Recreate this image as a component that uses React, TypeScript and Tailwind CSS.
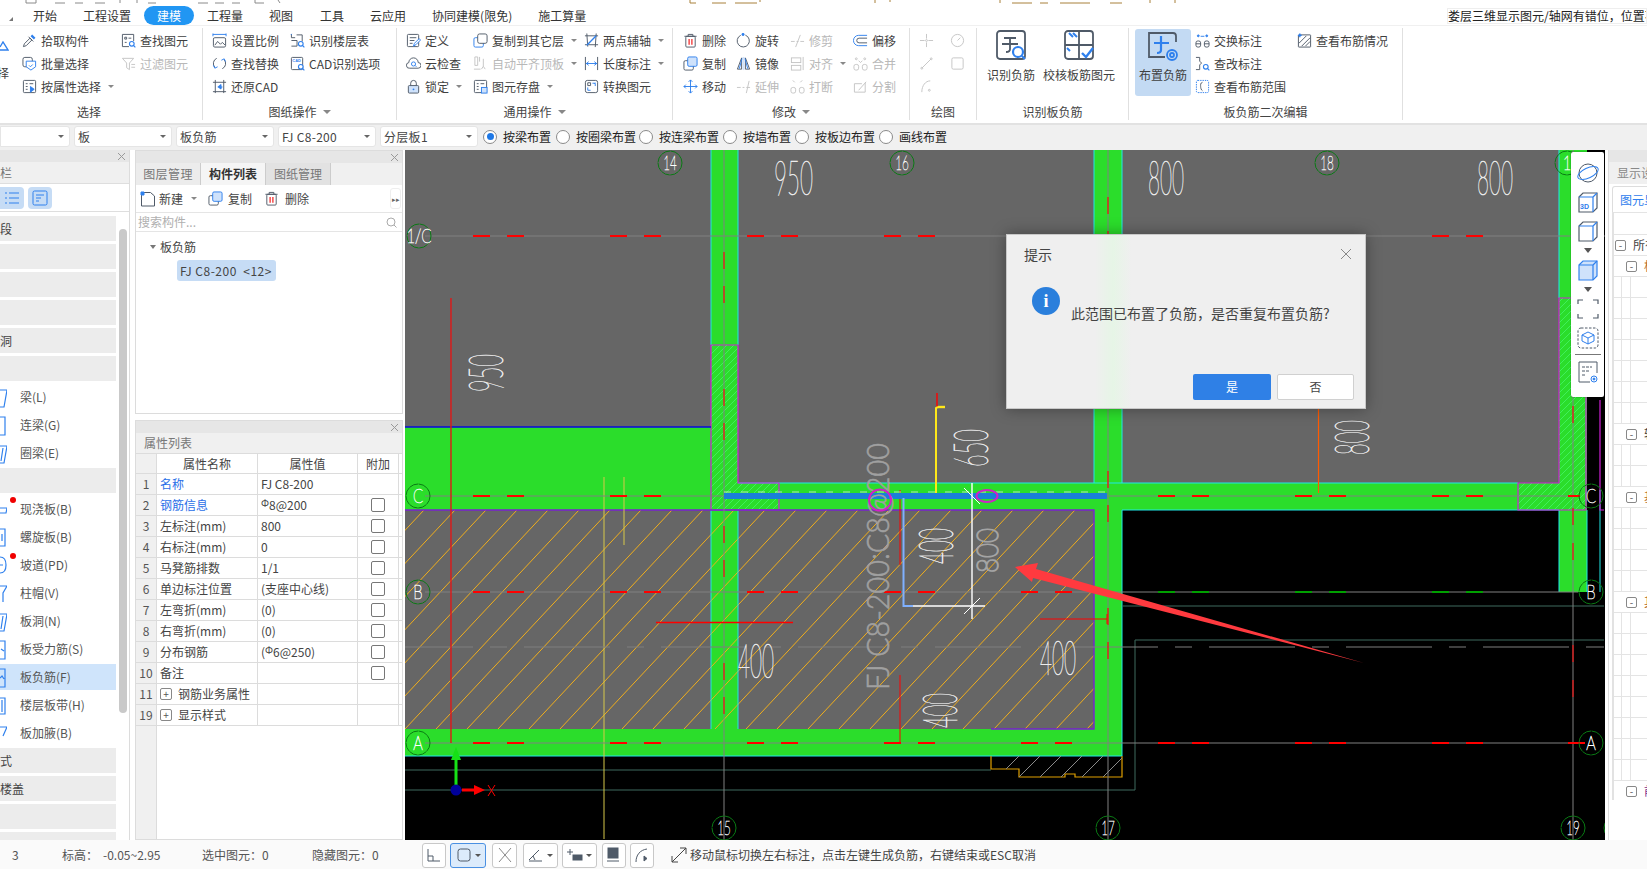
import React from "react";

const S = "#4f5a68";
const B = "#2f80ed";
const L = "#cfe2fb";
const G = "#c4c4c4";

type Node = React.ReactNode;
const Ic = ({ c, s = 16, cls = "" }: { c: Node; s?: number; cls?: string }) => (
  <svg width={s} height={s} viewBox="0 0 16 16" fill="none" stroke={S} strokeWidth={1} className={"shrink-0 " + cls}>
    {c}
  </svg>
);
const Mag = () => (
  <g stroke={B} strokeWidth={1.2}>
    <circle cx="11.5" cy="11.5" r="2.5" fill="#fff" />
    <path d="M13.3 13.3l2 2" />
  </g>
);
const icons: Record<string, Node> = {
  pick: <><path d="M1.5 14.5l1-3 6-6 2 2-6 6z" /><path d="M7 4l5 5" /><path d="M10 2.5l3.5 3.5" stroke={B} strokeWidth={2.4} /></>,
  batch: <><rect x="1" y="1.5" width="10" height="10" rx="2" /><path d="M4.5 5.5h10v6l-5 3.5-5-3.5z" fill="#fff" stroke={B} /><path d="M7.5 10l1.5 1.5 2.5-2.5" stroke={B} /></>,
  prop: <><rect x="1.5" y="1.5" width="13" height="13" rx="1" /><path d="M4 5h2M8 5h4M4 8h2M4 11h2" /><path d="M9 8v6l4-3z" fill={B} stroke={B} /></>,
  find: <><path d="M1.5 1.5h12v7M1.5 1.5v13h7" /><path d="M4 4.5h2v2H4zM8 5.5h3M4 10h2" /><Mag /></>,
  filter: <><path d="M1.5 2.5h12l-4.5 5v7l-3-2v-5z" stroke={G} /><path d="M11 9h4M11 12h4" stroke={G} /></>,
  scale: <><path d="M1 1.500h14M1 .5v3M15 .5v3" stroke={B} /><rect x="1.500" y="5" width="13" height="10" rx="1.500" /><path d="M3 13l3-4 3 3 2-2 3 3" /></>,
  replace: <><path d="M3 12A6 6 0 0 1 5 2.500" stroke={S} /><path d="M13 4a6 6 0 0 1-2 9.500" stroke={S} /><path d="M1.500 10l1.500 3 3-1.500M14.500 6L13 3l-3 1.500" stroke={B} /></>,
  restore: <><path d="M1 3.500h14M1 13.500h14M3.500 1v14M12.500 1v14" /><path d="M10 6L7 8.500l3 2M7 8.500h4" stroke={B} strokeWidth={1.6} /></>,
  floor: <><path d="M1.500 1v4h4M7 2h6v7M1.500 8h6v6h-6" /><path d="M2 1l-1 1" stroke={B} /><Mag /></>,
  cad: <><rect x="1.500" y="1.500" width="12" height="13" rx="1" /><text x="2.500" y="6.500" fontSize="4.200" fontWeight="700" fill={B} stroke="none" fontFamily="Liberation Sans">CAD</text><Mag /></>,
  define: <><rect x="1.500" y="1.500" width="12" height="13" rx="1" /><path d="M4 5h7M4 8h5M4 11h3" /><path d="M8 14l1-3 5-5 1.500 1.500-5 5z" fill="#fff" stroke={B} /></>,
  copyto: <><rect x="1" y="5" width="10" height="10" rx="1.500" stroke={B} fill="#fff" /><rect x="5" y="1" width="10" height="10" rx="2" fill="#fff" /></>,
  cloud: <><path d="M4 13a3 3 0 0 1-1-6 5 5 0 0 1 10 0 3 3 0 0 1 0 6z" /><circle cx="8" cy="8.500" r="2.200" stroke={B} /><path d="M9.600 10l1.500 1.500" stroke={B} /></>,
  lock: <><path d="M5 7V4.500a3 3 0 0 1 6 0V7" /><rect x="2.500" y="7" width="11" height="8" rx="1" fill={L} /><circle cx="8" cy="11" r="1" fill={B} stroke="none" /></>,
  level: <g stroke={G}><path d="M2 1v9h3V1zM7 1v5M1 14h7" /><path d="M11 3v8M9 14l2-3 2 3" /></g>,
  store: <><rect x="1.500" y="1.500" width="13" height="13" rx="1" /><path d="M4 5h2M8 5h4M4 8h2M4 11h2" /><rect x="9" y="9" width="6" height="6" fill={L} stroke={B} /></>,
  axis: <><path d="M3 .5l1 14M1 3h14M1 12.500h14M13 .5L12 15" /><path d="M3 13L13 3" stroke={B} strokeWidth={1.400} /></>,
  dim: <><path d="M1.500 1v14M14.500 1v14" /><path d="M2 8h12M5 6L2.500 8 5 10M11 6l2.500 2L11 10" stroke={B} /></>,
  convert: <><rect x="1.500" y="1.500" width="13" height="13" rx="2" /><path d="M4 4h3v3H4z" /><path d="M9 4.500h3v3M12 4l-1 1M7 12H4V9" stroke={B} /></>,
  del: <><path d="M1.500 3.500h13M5.500 3.500V1.500h5v2" /><rect x="3" y="3.500" width="10" height="11.500" rx="1" /><path d="M6.500 6.500v6M9.500 6.500v6" stroke="#e11" strokeWidth={1.200} /></>,
  rotate: <><path d="M10 2.300A6.500 6.500 0 1 1 5 2.500" /><circle cx="7.500" cy="1.500" r="1.200" fill={B} stroke={B} /></>,
  trim: <g stroke={G}><path d="M1 9h4M7 9h2M11 9h4M11 2L6 15" /></g>,
  offset: <><path d="M15 2.500H6A5.500 5.500 0 0 0 6 13.500h9" stroke={B} /><path d="M15 5.500H6.500A2.500 2.500 0 0 0 6.500 10.500H15" /></>,
  copy: <><rect x="1" y="5" width="10" height="10" rx="1.500" fill="#fff" /><rect x="5" y="1" width="10" height="10" rx="1.500" fill={L} stroke={B} /></>,
  mirror: <><path d="M6 2L1.500 14H6zM10 2l4.500 12H10z" /><path d="M6.500 2.500l-3 11M9.500 2.500l3 11" stroke={B} /><path d="M8 1v14" stroke={L} strokeWidth={2} /></>,
  align: <g stroke={G}><rect x="1.500" y="2" width="10" height="5" /><rect x="1.500" y="10" width="10" height="5" /><path d="M14 1v14" /></g>,
  merge: <g stroke={G}><circle cx="3.500" cy="3" r="1" /><circle cx="12.500" cy="3" r="1" /><rect x="1" y="9" width="5" height="6" rx="2" /><rect x="10" y="9" width="5" height="6" rx="2" /><path d="M6 5l2 2 2-2" /></g>,
  move: <g stroke={B}><path d="M8 1v14M1 8h14M6 3l2-2 2 2M6 13l2 2 2-2M3 6L1 8l2 2M13 6l2 2-2 2" /></g>,
  extend: <g stroke={G}><path d="M1 9h4M7 9h2M11 9h4M14 2L11 15" /></g>,
  brk: <g stroke={G}><path d="M3 1.500l2 2M13 1.500l-2 2" /><rect x="1" y="9" width="5" height="6" rx="2" /><rect x="10" y="9" width="5" height="6" rx="2" /></g>,
  split: <g stroke={G}><path d="M13 4v10H1.500V5h8" /><path d="M6 12l8-9" /></g>,
  swap: <><circle cx="3.500" cy="3" r="1" fill={B} stroke={B} /><circle cx="12.500" cy="3" r="1" fill={B} stroke={B} /><path d="M6 3.500h4" stroke={B} /><rect x="1" y="8.500" width="5" height="6.500" rx="2" /><rect x="10" y="8.500" width="5" height="6.500" rx="2" /><path d="M1 11.500h5M10 11.500h5" /></>,
  check: <><path d="M1 1.500h4v4l2 2-2 2v5H1" /><Mag /></>,
  range: <><rect x="1.500" y="1.500" width="13" height="13" rx="1.500" stroke={B} strokeDasharray="1.500 1" /><path d="M8 3.500C5.500 4 6 7 6 8s.5 4 2 4.500" /></>,
  see: <><rect x="1.500" y="2" width="13" height="13" rx="0.500" /><path d="M2 11l8-8M5 14l9-9M9 14l5-5" /><path d="M3 .5v4M1 2.500h4" stroke={B} strokeWidth={1.500} /></>,
};

const Item = ({ i, t, grey, dd, gap = 4 }: { i: string; t: string; grey?: boolean; dd?: boolean; gap?: number }) => (
  <div className="flex items-center h-[23px]" style={{ gap }}>
    <Ic c={icons[i]} s={15} />
    <span className={"whitespace-nowrap " + (grey ? "text-[#b8b8b8]" : "text-[#3f3f3f]")}>{t}</span>
    {dd && <span className="ml-[3px] w-0 h-0 border-x-[3px] border-x-transparent border-t-[3px] border-t-[#888]" />}
  </div>
);
const Col = ({ w, children }: { w: number; children: Node }) => (
  <div className="flex flex-col shrink-0" style={{ width: w }}>{children}</div>
);
const Group = ({ w, pl, label, dd, pr = 0, children }: { w: number; pl: number; label: string; dd?: boolean; pr?: number; children: Node }) => (
  <div className="flex flex-col h-[92px] border-r border-[#e0e0e0] shrink-0" style={{ width: w }}>
    <div className="flex h-[70px] pt-[1px] shrink-0" style={{ paddingLeft: pl }}>{children}</div>
    <div className="h-[28px] shrink-0 flex items-center justify-center gap-[6px] text-[#444]" style={{ paddingRight: pr }}>
      {label}
      {dd && <span className="w-0 h-0 border-x-[4px] border-x-transparent border-t-[4px] border-t-[#888]" />}
    </div>
  </div>
);
const Big = ({ c, t, w, active }: { c: Node; t: string; w: number; active?: boolean }) => (
  <div className={"flex flex-col items-center h-[67px] rounded-[3px] shrink-0 " + (active ? "bg-[#c3daf3]" : "")} style={{ width: w }}>
    <svg width="32" height="32" viewBox="0 0 32 32" fill="none" stroke={S} strokeWidth={1.8} className="mt-[1px]">{c}</svg>
    <span className="mt-[5px] whitespace-nowrap leading-[16px] text-[#3f3f3f]">{t}</span>
  </div>
);

const Select = ({ t, w, cut }: { t: string; w: number; cut?: boolean }) => (
  <div className={"h-[21px] bg-white border border-[#e5e5e5] flex items-center justify-between pl-[3px] pr-[5px] shrink-0 " + (cut ? "rounded-r-[3px]" : "rounded-[3px]")} style={{ width: w }}>
    <span className="text-[#444] text-[12px] tracking-[0.3px]">{t}</span>
    <span className="w-0 h-0 border-x-[3px] border-x-transparent border-t-[3px] border-t-[#666]" />
  </div>
);
const Radio = ({ t, w, on }: { t: string; w: number; on?: boolean }) => (
  <div className="flex items-center gap-[6px] shrink-0" style={{ width: w }}>
    <span className="w-[14px] h-[14px] rounded-full border border-[#8a8a8a] bg-white flex items-center justify-center">
      {on && <span className="w-[7px] h-[7px] rounded-full bg-[#1e78e6]" />}
    </span>
    <span className="text-[#222] whitespace-nowrap">{t}</span>
  </div>
);

const NavG = ({ t, mt = 3 }: { t?: string; mt?: number }) => (
  <div className="h-[25px] bg-[#ececec] flex items-center text-[#444] w-[116px] shrink-0" style={{ marginTop: mt }}>{t}</div>
);
const NavI = ({ t, dot, on, d }: { t: string; dot?: boolean; on?: boolean; d: string }) => (
  <div className={"h-[26px] my-[1px] w-[116px] flex items-center relative shrink-0 " + (on ? "bg-[#cfe4fb]" : "")}>
    <svg width="7" height="24" viewBox="0 0 7 24" fill="none" stroke={B} strokeWidth={1.2} className="shrink-0"><path d={d} /></svg>
    <span className="ml-[13px] text-[#555] whitespace-nowrap">{t}</span>
    {dot && <span className="absolute left-[10px] top-[1px] w-[6px] h-[6px] rounded-full bg-[#f00000]" />}
  </div>
);

const Strip = () => (
  <div className="h-[12px] bg-[#e6e6e6] flex justify-end items-center pr-[3px] text-[#9a9a9a] shrink-0">
    <svg width="9" height="9" viewBox="0 0 9 9" stroke="#999"><path d="M1 1l7 7M8 1L1 8" /></svg>
  </div>
);

const rows: [string, string, Node, boolean, boolean?][] = [
  ["1", "名称", "FJ C8-200", false, true],
  ["2", "钢筋信息", <><span className="text-[10px] relative top-[-2px]">Φ</span>8@200</>, true, true],
  ["3", "左标注(mm)", "800", true],
  ["4", "右标注(mm)", "0", true],
  ["5", "马凳筋排数", "1/1", true],
  ["6", "单边标注位置", "(支座中心线)", true],
  ["7", "左弯折(mm)", "(0)", true],
  ["8", "右弯折(mm)", "(0)", true],
  ["9", "分布钢筋", <>(<span className="text-[10px] relative top-[-2px]">Φ</span>6@250)</>, true],
  ["10", "备注", "", true],
];

const Cell = ({ w, children, cls = "" }: { w: number; children?: Node; cls?: string }) => (
  <div className={"h-full flex items-center border-r border-[#dcdcdc] shrink-0 " + cls} style={{ width: w }}>{children}</div>
);
const Plus = () => (
  <span className="w-[12px] h-[12px] border border-[#888] rounded-[2px] flex items-center justify-center text-[10px] leading-none text-[#555] ml-[3px] mr-[6px]">+</span>
);
const Minus = ({ ml }: { ml: number }) => (
  <span className="w-[11px] h-[11px] border border-[#888] rounded-[2px] flex items-center justify-center text-[10px] leading-none text-[#555] bg-white shrink-0" style={{ marginLeft: ml }}>-</span>
);

/* thin CAD stroke lettering: Lato hairline, squeezed to the box */
const CadT = ({ x, y, w, h, t, rot, col = "#ececec", sw = 0.7, weight = 100 }: { x: number; y: number; w: number; h: number; t: string; rot?: boolean; col?: string; sw?: number; weight?: number }) => {
  const size = h / 0.72;
  const sx = w / (t.length * 0.58 * size);
  return (
    <text
      transform={`translate(${x} ${y}) ${rot ? "rotate(-90)" : ""} scale(${sx} 1)`}
      fontSize={size}
      fontFamily="Lato"
      fontWeight={weight}
      fill={col}
      stroke={col}
      strokeWidth={sw}
    >
      {t}
    </text>
  );
};
const Bub = ({ x, y, t, r = 12 }: { x: number; y: number; t: string; r?: number }) => {
  const w = t.length > 1 ? (t === "1/C" ? 27 : 14) : 9;
  const size = 20;
  return (
    <g>
      <circle cx={x} cy={y} r={r} stroke="#0a7a14" strokeWidth={1} fill="none" strokeDasharray="9 0.500" />
      <text
        transform={`translate(${x} ${y + 7}) scale(${w / (t.length * 0.6 * size)} 1)`}
        textAnchor="middle"
        fontSize={size}
        fontFamily="Lato"
        fontWeight={100}
        fill="#fff"
        stroke="#fff"
        strokeWidth={0.6}
      >
        {t}
      </text>
    </g>
  );
};

const HP = (y: number, from: number, to: number, color = "#ff0000") => {
  const out: Node[] = [];
  for (let k = 0; k < 9; k++) {
    for (const s of [473 + 137 * k, 507 + 137 * k]) {
      if (s >= from && s + 17 <= to) out.push(<path key={y + "-" + s} d={`M${s} ${y}h17`} stroke={color} strokeWidth={2} />);
    }
  }
  return out;
};
const VP = (x: number, a: number, b: number, from: number, to: number) => {
  const out: Node[] = [];
  for (let k = -1; k < 6; k++) {
    for (const s of [a + 137 * k, b + 137 * k]) {
      if (s >= from && s <= to) out.push(<path key={x + "-" + s} d={`M${x} ${s}v17`} stroke="#f01010" strokeWidth={1.2} />);
    }
  }
  return out;
};

const hatch = (() => {
  const out: Node[] = [];
  for (let i = -10; i < 30; i++) {
    const x = 405 + i * 31;
    out.push(<path key={i} d={`M${x} 729L${x + 205} 510`} />);
  }
  return out;
})();
const lime = (() => {
  const out: Node[] = [];
  for (let i = -2; i < 70; i++) {
    const s = 290 + i * 7;
    out.push(<path key={i} d={`M700 ${s + 40}L800 ${s - 60}M1510 ${s + 40}L1610 ${s - 60}`} />);
  }
  return out;
})();

const Canvas = () => (
  <svg width="1200" height="690" viewBox="405 150 1200 690" fill="none" className="block">
    <defs>
      <clipPath id="slab"><rect x="405" y="510" width="689" height="219" /></clipPath>
      <clipPath id="m1"><path d="M711 345H738V483H779V510H711Z" /></clipPath>
      <clipPath id="m2"><path d="M1559 298H1586V510H1518V483H1559Z" /></clipPath>
      <clipPath id="shape"><path d="M991 756V769H1019V777H1122V756Z" /></clipPath>
    </defs>
    <rect x="405" y="150" width="1200" height="690" fill="#000" />
    <rect x="405" y="150" width="1154" height="333" fill="#666" />
    <rect x="405" y="510" width="689" height="219" fill="#666" />
    <g fill="#2bdd2b">
      <rect x="711" y="150" width="27" height="579" />
      <rect x="1094" y="150" width="28" height="606" />
      <rect x="1559" y="150" width="28" height="442" />
      <rect x="711" y="483" width="876" height="27" />
      <rect x="405" y="427" width="306" height="83" />
      <rect x="405" y="729" width="717" height="27" />
    </g>
    <g clipPath="url(#slab)" stroke="#f0ae1c" strokeWidth={1}>{hatch}</g>
    <g clipPath="url(#m1)"><g stroke="#40f05c" strokeWidth={1}>{lime}</g></g>
    <g clipPath="url(#m2)"><g stroke="#40f05c" strokeWidth={1}>{lime}</g></g>

    <g stroke="#20e8e8" strokeWidth={1}>
      <path d="M711 150V345M738 150V345M711 510V729M738 510V729M1094 150V483M1122 150V483" />
      <path d="M738 483H1518M1122 510H1559M1122 510V756M405 756H1122M1559 150V298M1559 510V592M1587 510V592M1600 490V592" />
    </g>
    <g stroke="#d020d8" strokeWidth={1.2}>
      <path d="M711 345H738V483H779V510H711Z" />
      <path d="M1559 298H1586V510H1518V483H1559Z" />
      <path d="M1600 400V510H1604" />
    </g>
    <path d="M405 427H711" stroke="#0808e0" strokeWidth={1.4} />
    <path d="M405 510H1094V729H991" stroke="#7a22d0" strokeWidth={1.4} />

    <g stroke="#3e6b5e" strokeWidth={1}>
      <path d="M405 770H991M405 790H1135V640H1604M1122 606H1604" />
    </g>
    <path d="M991 756V769H1019V777H1065V774H1075V777H1122V756" stroke="#e0a000" strokeWidth={1.2} />
    <g stroke="#8a8a8a" clipPath="url(#shape)">
      <path d="M998 777l21-21M1019 777l21-21M1040 777l21-21M1061 777l21-21M1082 777l21-21M1103 777l21-21" />
    </g>

    <path d="M604 477V839" stroke="#d6c84a" />
    <path d="M624 477V545" stroke="#d6c84a" />

    <g stroke="#808080" strokeWidth={1}>
      <path d="M425 236H1605M425 496H1578M425 592H1578M425 743H1578" />
      <path d="M724 150V840M1108 150V840M1573 150V840" />
    </g>
    <path d="M405 647H473M490 647H507M524 647H610M627 647H644M661 647H747M764 647H781M798 647H884M901 647H918M935 647H1021M1038 647H1055M1072 647H1158M1175 647H1192M1209 647H1295M1312 647H1329M1346 647H1432M1449 647H1466M1483 647H1569M1586 647H1604" stroke="#7e7e7e" />

    {HP(236, 405, 1572)}
    {HP(496, 405, 1572)}
    {HP(592, 405, 1122)}
    {HP(592, 1122, 1572, "#00a000")}
    {HP(743, 405, 1572)}
    <path d="M1568 743h17M1568 496h12" stroke="#f00" strokeWidth={2} />
    {VP(724, 252, 286, 150, 725)}
    {VP(1108, 197, 231, 150, 725)}
    {VP(1573, 234, 269, 300, 700)}

    <path d="M451 298V743" stroke="#e01818" strokeWidth={1.4} />
    <path d="M656 622.500H793" stroke="#f00" strokeWidth={1.4} />
    <path d="M1040 619H1107M1107 614v10" stroke="#f00" strokeWidth={1} />
    <path d="M900 490V565M900 675V743H885" stroke="#f00" strokeWidth={1} />
    <path d="M937 393V407" stroke="#f00" strokeWidth={1.4} />
    <path d="M936 493V408L938 407" stroke="#ffe81a" strokeWidth={2} />
    <path d="M938 407h7" stroke="#ffe81a" strokeWidth={2.4} />
    <path d="M1318.500 409V493" stroke="#ff5a00" strokeWidth={1.2} />

    <path d="M724 496H1107" stroke="#1a7fd8" strokeWidth={6} />
    <path d="M724 492H1107" stroke="#e8f0f0" strokeWidth={1} strokeDasharray="7 10" opacity="0.7" />
    <path d="M903.500 498V606H913" stroke="#7fb0ff" strokeWidth={2} />
    <path d="M913 606H985M972 483V619" stroke="#fff" strokeWidth={1.400} />
    <path d="M964 614l16-16M964 488l16 16" stroke="#fff" strokeWidth={1} />

    <CadT x={774} y={195} w={39} h={35} t="950" />
    <CadT x={1148} y={195} w={36} h={35} t="800" />
    <CadT x={1477} y={195} w={36} h={35} t="800" />
    <CadT x={503} y={392} w={38} h={34} t="950" rot />
    <CadT x={988} y={467} w={38} h={34} t="650" rot />
    <CadT x={1369} y={455} w={35} h={34} t="800" rot />
    <CadT x={953} y={564} w={36} h={34} t="400" rot />
    <CadT x={957} y={728} w={35} h={35} t="400" rot />
    <CadT x={738} y={678} w={36} h={34} t="400" />
    <CadT x={1040} y={675} w={36} h={34} t="400" />
    <CadT x={998} y={573} w={45} h={22} t="800" rot col="#a4a4a4" sw={1.6} />
    <text
      transform="translate(889 690) rotate(-90) scale(0.900 1)"
      fontSize="32"
      fontFamily="Lato"
      fontWeight={300}
      fill="#a0a0a0"
      stroke="#a0a0a0"
      strokeWidth={0.6}
    >
      FJ C8-200:C8@200
    </text>
    <ellipse cx="880" cy="500" rx="11" ry="10.500" stroke="#d020c8" strokeWidth={2} />
    <ellipse cx="987" cy="496" rx="10.500" ry="6" stroke="#d020c8" strokeWidth={2} />

    <Bub x={670} y={163} t="14" />
    <Bub x={902} y={163} t="16" />
    <Bub x={1327} y={163} t="18" />
    <Bub x={1567} y={163} t="1" />
    <Bub x={419} y={236} t="1/C" />
    <Bub x={418} y={496} t="C" />
    <Bub x={418} y={592} t="B" />
    <Bub x={418} y={743} t="A" />
    <Bub x={724} y={828} t="15" />
    <Bub x={1108} y={828} t="17" />
    <Bub x={1573} y={828} t="19" />
    <Bub x={1591} y={496} t="C" />
    <Bub x={1591} y={592} t="B" />
    <Bub x={1591} y={743} t="A" />
    <circle cx="1616" cy="828" r="12" stroke="#0a7a14" />

    <path d="M456 785V758" stroke="#16e016" strokeWidth={3} />
    <path d="M456 747l-5 13h10z" fill="#16e016" />
    <path d="M462 790H476" stroke="#f00" strokeWidth={3} />
    <path d="M485 790l-11-5v10z" fill="#f00" />
    <circle cx="456" cy="790" r="5.500" fill="#00009a" />
    <path d="M488 785l7 11M495 785l-7 11" stroke="#f00" />

    <path d="M1015 567L1038 563L1036 569L1364 663L1033 578L1032 582Z" fill="#ff3a3f" />
  </svg>
);

const TB = ({ c, h = 29 }: { c: Node; h?: number }) => (
  <div className="flex items-center justify-center shrink-0" style={{ height: h }}>
    <svg width="22" height="22" viewBox="0 0 22 22" fill="none" stroke={S} strokeWidth={1}>{c}</svg>
  </div>
);
const Tri = () => <div className="h-[10px] flex items-center justify-center shrink-0"><span className="w-0 h-0 border-x-[4px] border-x-transparent border-t-[5px] border-t-[#555]" /></div>;
const cube = (fill: string, st: string) => (
  <>
    <path d="M2 6l4-4h14v15l-4 4H2z" fill={fill} stroke={st} strokeWidth={1.2} />
    <path d="M2 6h14v15M16 6l4-4" stroke={st === S ? B : st} strokeWidth={1.2} />
  </>
);

const SBtn = ({ w, ml, on, c, dd }: { w: number; ml: number; on?: boolean; c: Node; dd?: boolean }) => (
  <div className={"h-[25px] rounded-[3px] border flex items-center justify-center gap-[3px] shrink-0 " + (on ? "border-[#4a90e2] bg-[#dcebfb]" : "border-[#c8c8c8] bg-white")} style={{ width: w, marginLeft: ml }}>
    <svg width="16" height="16" viewBox="0 0 16 16" fill="none" stroke={S} strokeWidth={1}>{c}</svg>
    {dd && <span className="w-0 h-0 border-x-[3px] border-x-transparent border-t-[3px] border-t-[#555]" />}
  </div>
);

export default function App() {
  return (
    <div
      className="w-[1647px] h-[869px] bg-white overflow-hidden relative text-[12px] leading-[16px] text-[#444] flex flex-col"
      style={{ fontFamily: '"Noto Sans CJK SC","Noto Sans",sans-serif' }}
    >
      <svg width="1647" height="4" viewBox="0 0 1647 4" fill="none" className="block shrink-0">
        <path d="M26 0v3h10V0M55 3h10M75 3h8M95 3h10M120 0v3M137 0v3M148 3h8M198 3h10M215 3h9M232 3h8M255 0v3h9M278 0l2 3" stroke="#8a8a8a" />
        <path d="M690 0v3h6M712 3h14M735 3h22M760 0v2M875 0v3M890 0v2M1000 0v3M1012 3h20M1040 3h8M1060 3h30M1110 3h12M1150 0v3M1175 0v3" stroke="#a8803a" />
      </svg>
      <div className="h-[22px] pt-[2px] flex items-center relative shrink-0 border-b border-[#f0f0f0] text-[#333]">
        <span className="absolute left-[9px] top-[13px] w-0 h-0 border-l-[4px] border-l-transparent border-b-[4px] border-b-[#777]" />
        <span className="ml-[33px]">开始</span>
        <span className="ml-[26px]">工程设置</span>
        <span className="ml-[13px] w-[50px] h-[19px] rounded-full bg-[#2196f3] text-white flex items-center justify-center">建模</span>
        <span className="ml-[13px]">工程量</span>
        <span className="ml-[26px]">视图</span>
        <span className="ml-[27px]">工具</span>
        <span className="ml-[26px]">云应用</span>
        <span className="ml-[26px]">协同建模(限免)</span>
        <span className="ml-[26px]">施工算量</span>
        <div className="ml-auto w-[200px] h-[16px] border border-[#eee] bg-white text-[#222] whitespace-nowrap overflow-hidden leading-[14px]">{"娄层三维显示图元/轴网有错位\uFF0C位置不对"}</div>
      </div>

      {/* Ribbon */}
      <div className="h-[99px] pt-[2px] flex shrink-0 border-b-2 border-[#e2e2e2] bg-white relative">
        <Group w={203} pl={0} label="选择" pr={24}>
          <div className="w-[22px] shrink-0 flex flex-col overflow-hidden">
            <svg width="9" height="10" viewBox="0 0 9 10" fill="none" stroke={B} strokeWidth={1.4} className="mt-[12px] shrink-0"><path d="M0 9h8L3 1 0 6" /></svg>
            <span className="-ml-[3px] mt-[14px] text-[#3f3f3f] leading-[16px]">择</span>
          </div>
          <Col w={99}>
            <Item i="pick" t="拾取构件" />
            <Item i="batch" t="批量选择" />
            <Item i="prop" t="按属性选择" dd />
          </Col>
          <Col w={80}>
            <Item i="find" t="查找图元" />
            <Item i="filter" t="过滤图元" grey />
          </Col>
        </Group>
        <Group w={194} pl={9} label="图纸操作" dd>
          <Col w={78}>
            <Item i="scale" t="设置比例" />
            <Item i="replace" t="查找替换" />
            <Item i="restore" t="还原CAD" />
          </Col>
          <Col w={100}>
            <Item i="floor" t="识别楼层表" />
            <Item i="cad" t="CAD识别选项" />
          </Col>
        </Group>
        <Group w={276} pl={9} label="通用操作" dd>
          <Col w={67}>
            <Item i="define" t="定义" />
            <Item i="cloud" t="云检查" />
            <Item i="lock" t="锁定" dd />
          </Col>
          <Col w={111}>
            <Item i="copyto" t="复制到其它层" dd />
            <Item i="level" t="自动平齐顶板" grey dd />
            <Item i="store" t="图元存盘" dd />
          </Col>
          <Col w={85}>
            <Item i="axis" t="两点辅轴" dd />
            <Item i="dim" t="长度标注" dd />
            <Item i="convert" t="转换图元" />
          </Col>
        </Group>
        <Group w={237} pl={10} label="修改" dd>
          <Col w={53}>
            <Item i="del" t="删除" />
            <Item i="copy" t="复制" />
            <Item i="move" t="移动" />
          </Col>
          <Col w={54}>
            <Item i="rotate" t="旋转" />
            <Item i="mirror" t="镜像" />
            <Item i="extend" t="延伸" grey />
          </Col>
          <Col w={63}>
            <Item i="trim" t="修剪" grey />
            <Item i="align" t="对齐" grey dd />
            <Item i="brk" t="打断" grey />
          </Col>
          <Col w={50}>
            <Item i="offset" t="偏移" />
            <Item i="merge" t="合并" grey />
            <Item i="split" t="分割" grey />
          </Col>
        </Group>
        <Group w={67} pl={9} label="绘图">
          <div className="grid grid-cols-[31px_16px] auto-rows-[23px] items-center">
            <Ic s={15} c={<g stroke={G}><path d="M8 1v5M8 10v5M1 8h5M10 8h5" /><circle cx="8" cy="8" r="1" /></g>} />
            <Ic s={15} c={<g stroke={G}><circle cx="8" cy="8" r="6.500" /><path d="M8 8l3-3" /></g>} />
            <Ic s={15} c={<g stroke={G}><path d="M3 13L13 3" /><circle cx="3" cy="13" r="1" /><circle cx="13" cy="3" r="1" /></g>} />
            <Ic s={15} c={<rect x="2" y="2" width="12" height="12" rx="1.500" stroke={G} />} />
            <Ic s={15} c={<g stroke={G}><path d="M3 14C3 7 7 2 12 2" /><circle cx="11" cy="12" r="1" /></g>} />
          </div>
        </Group>
        <Group w={152} pl={9} label="识别板负筋">
          <Big w={50} t="识别负筋" c={<><rect x="2" y="1" width="28" height="28" rx="3" /><path d="M7 14h16M15 7v12c0 3-3 3-4 3M9 8h12" /><circle cx="23" cy="22" r="5" stroke={B} fill="#fff" strokeWidth={2.200} /><path d="M27 26l3 3" stroke={B} strokeWidth={2.200} /></>} />
          <Big w={86} t="校核板筋图元" c={<><rect x="2" y="1" width="28" height="28" rx="3" /><path d="M16 1v28M2 15h28" /><path d="M6 3l4 4M10 3l4 4M4 18l3 3" stroke={B} strokeWidth={2} /><path d="M19 23l4 4 7-9" stroke={B} strokeWidth={2.400} fill="#fff" /></>} />
        </Group>
        <Group w={274} pl={6} label="板负筋二次编辑">
          <Big w={56} active t="布置负筋" c={<><path d="M26 3c2 0 3 1 3 3v6M2 10V3h24M2 3v24h16" /><path d="M7 13h15M14 6v14c0 3-2 3-4 3" stroke={B} strokeWidth={2.200} /><circle cx="25" cy="25" r="5" stroke={B} /><circle cx="25" cy="25" r="2" stroke={B} /></>} />
          <div className="w-[4px] shrink-0" />
          <Col w={102}>
            <Item i="swap" t="交换标注" />
            <Item i="check" t="查改标注" />
            <Item i="range" t="查看布筋范围" />
          </Col>
          <Col w={100}>
            <Item i="see" t="查看布筋情况" />
          </Col>
        </Group>
      </div>

      {/* Option bar */}
      <div className="h-[25px] pb-[2px] bg-[#f0f0f0] flex items-center shrink-0 gap-[4px]">
        <Select t="" w={70} cut />
        <Select t="板" w={98} />
        <Select t="板负筋" w={98} />
        <Select t="FJ C8-200" w={98} />
        <Select t="分层板1" w={98} />
        <div className="flex ml-[1px]">
          <Radio t="按梁布置" w={73} on />
          <Radio t="按圈梁布置" w={83} />
          <Radio t="按连梁布置" w={84} />
          <Radio t="按墙布置" w={72} />
          <Radio t="按板边布置" w={84} />
          <Radio t="画线布置" w={80} />
        </div>
      </div>

      {/* Main */}
      <div className="flex h-[690px] shrink-0 bg-white">
        {/* Left nav */}
        <div className="w-[130px] shrink-0 flex flex-col border-r border-[#dcdcdc] relative overflow-hidden">
          <Strip />
          <div className="h-[22px] bg-[#f0f0f0] flex items-center text-[#777] border-b border-[#dedede] shrink-0">栏</div>
          <div className="h-[28px] flex items-center gap-[4px] border-b border-[#dedede] shrink-0">
            <div className="w-[24px] h-[22px] bg-[#c6dcf5] rounded-r-[4px] flex items-center justify-center">
              <svg width="16" height="14" viewBox="0 0 16 14" fill="none" stroke={B}><path d="M1 2h2M1 7h2M1 12h2M5 2h10M5 7h10M5 12h10" /></svg>
            </div>
            <div className="w-[24px] h-[22px] bg-[#c6dcf5] rounded-[4px] flex items-center justify-center">
              <svg width="16" height="16" viewBox="0 0 16 16" fill="none" stroke={B}><rect x="1" y="1" width="14" height="14" rx="1.500" /><path d="M4 5h8M4 8h5M4 11h3" /></svg>
            </div>
          </div>
          <div className="flex flex-col pt-[1px]">
            <NavG t="段" />
            <NavG />
            <NavG />
            <NavG />
            <NavG t="洞" />
            <NavG />
            <div className="h-[2px] shrink-0" />
            <NavI t="梁(L)" d="M0 5h7L4 22H0" />
            <NavI t="连梁(G)" d="M0 4h5v18H0" />
            <NavI t="圈梁(E)" d="M0 5h7L4 22H0M3 7L1 20" />
            <NavG mt={1} />
            <div className="h-[2px] shrink-0" />
            <NavI t="现浇板(B)" dot d="M0 11h7L6 16H0" />
            <NavI t="螺旋板(B)" d="M0 4h5v17H0M2 9v7" />
            <NavI t="坡道(PD)" dot d="M0 4c4 0 6 3 6 8s-2 8-6 8M0 12h3" />
            <NavI t="柱帽(V)" d="M0 5h7L3 12v9" />
            <NavI t="板洞(N)" d="M0 5h7L4 22H0M3 7L1 20" />
            <NavI t="板受力筋(S)" d="M0 4h5v18H0M1 12l3 2" />
            <NavI t="板负筋(F)" on d="M0 4h5v18H0M0 13l2-2 2 3" />
            <NavI t="楼层板带(H)" d="M0 5h5v16H0M2 7v12" />
            <NavI t="板加腋(B)" d="M0 6h7L3 15" />
            <NavG t="式" mt={1} />
            <NavG t="楼盖" />
            <NavG />
            <NavG />
          </div>
          <div className="absolute left-[119px] top-[79px] w-[8px] h-[484px] rounded-full bg-[#c9c9c9]" />
        </div>

        <div className="w-[5px] shrink-0" />

        {/* Middle */}
        <div className="w-[268px] shrink-0 flex flex-col">
          <div className="h-[264px] flex flex-col border border-[#dcdcdc] shrink-0">
            <Strip />
            <div className="h-[22px] flex bg-[#f0f0f0] shrink-0">
              <div className="w-[65px] flex items-center justify-center bg-[#ececec] border-r border-[#ccc] text-[#777] tracking-[0.4px] text-[12px]">图层管理</div>
              <div className="w-[65px] flex items-center justify-center bg-[#f5f5f5] border-r border-[#ccc] text-[#333] font-bold">构件列表</div>
              <div className="w-[65px] flex items-center justify-center bg-[#e2e2e2] border-r border-[#ccc] text-[#777]">图纸管理</div>
            </div>
            <div className="h-[28px] flex items-center border-b border-[#e5e5e5] shrink-0 relative pl-[4px]">
              <Ic s={16} c={<><path d="M1.500 4v11h13V5L10.500 1.500H4" /><path d="M1 1h3v3H1z" fill={B} stroke={B} /></>} />
              <span className="ml-[3px]">新建</span>
              <span className="ml-[8px] w-0 h-0 border-x-[3px] border-x-transparent border-t-[3px] border-t-[#888]" />
              <span className="ml-[11px]"><Ic s={15} c={icons.copy} /></span>
              <span className="ml-[5px]">复制</span>
              <span className="ml-[12px]"><Ic s={15} c={icons.del} /></span>
              <span className="ml-[6px]">删除</span>
              <div className="absolute right-[1px] top-[3px] w-[11px] h-[21px] border border-[#eee] rounded-[3px] flex items-center justify-center text-[7px] text-[#666]">▸▸</div>
            </div>
            <div className="h-[19px] flex items-center justify-between border-b border-[#e5e5e5] pl-[2px] pr-[5px] text-[#b0b0b0] shrink-0">
              <span>搜索构件...</span>
              <svg width="11" height="11" viewBox="0 0 11 11" fill="none" stroke="#aaa"><circle cx="5" cy="5" r="4" /><path d="M8 8l2.500 2.500" /></svg>
            </div>
            <div className="flex items-center pl-[14px] pt-[7px] gap-[3px] text-[#444]">
              <span className="w-0 h-0 border-x-[3px] border-x-transparent border-t-[4px] border-t-[#777]" />
              <span className="ml-[1px]">板负筋</span>
            </div>
            <div className="ml-[41px] mt-[5px] w-[99px] h-[21px] rounded-[3px] bg-[#c6dcf5] flex items-center pl-[3px] text-[#444] whitespace-pre tracking-[0.5px]">FJ C8-200  {"<12>"}</div>
          </div>
          <div className="h-[6px] shrink-0" />
          <div className="flex-1 flex flex-col border border-[#dcdcdc] min-h-0 relative">
            <Strip />
            <div className="h-[20px] bg-[#f0f0f0] flex items-center pl-[8px] text-[#777] shrink-0">属性列表</div>
            <div className="flex h-[21px] border-y border-[#dcdcdc] text-[#444] shrink-0">
              <Cell w={21} cls="bg-[#f0f0f0]" />
              <Cell w={101} cls="justify-center">属性名称</Cell>
              <Cell w={100} cls="justify-center">属性值</Cell>
              <Cell w={41} cls="justify-center">附加</Cell>
            </div>
            {rows.map(([n, a, v, ck, blue]) => (
              <div key={n} className="flex h-[21px] border-b border-[#dcdcdc] shrink-0">
                <Cell w={21} cls="bg-[#f0f0f0] justify-center text-[#555]">{n}</Cell>
                <Cell w={101} cls={"pl-[3px] " + (blue ? "text-[#2a6fe8]" : "text-[#444]")}>{a}</Cell>
                <Cell w={100} cls="pl-[3px] text-[#444] whitespace-nowrap">{v}</Cell>
                <Cell w={41} cls="justify-center">
                  {ck && <span className="w-[14px] h-[14px] rounded-[2px] border border-[#777] bg-white" />}
                </Cell>
              </div>
            ))}
            <div className="flex h-[21px] border-b border-[#dcdcdc] shrink-0">
              <Cell w={21} cls="bg-[#f0f0f0] justify-center text-[#555]">11</Cell>
              <Cell w={101}><Plus />钢筋业务属性</Cell>
              <Cell w={100} />
              <Cell w={41} />
            </div>
            <div className="flex h-[21px] border-b border-[#dcdcdc] shrink-0">
              <Cell w={21} cls="bg-[#f0f0f0] justify-center text-[#555]">19</Cell>
              <Cell w={101}><Plus />显示样式</Cell>
              <Cell w={100} />
              <Cell w={41} />
            </div>
            <div className="flex-1 w-[21px] bg-[#f0f0f0] border-r border-[#dcdcdc]" />
          </div>
        </div>

        <div className="w-[2px] shrink-0" />

        {/* Canvas */}
        <div className="w-[1200px] shrink-0 relative">
          <Canvas />
          <div className="absolute left-[1166px] top-[2px] w-[33px] h-[245px] bg-white rounded-[2px] flex flex-col items-center pt-[6px] shadow-[0_0_1px_#000]">
            <TB c={<><ellipse cx="11" cy="11" rx="9" ry="9" /><ellipse cx="11" cy="11" rx="11" ry="5" transform="rotate(-25 11 11)" stroke={B} /></>} />
            <TB c={<>{cube("#fff", S)}<text x="3" y="18" fontSize="7" fontWeight="700" fill={B} stroke="none" fontFamily="Liberation Sans">3D</text></>} />
            <TB h={29} c={cube("#fff", S)} />
            <Tri />
            <TB c={cube(L, B)} />
            <Tri />
            <TB c={<path d="M1 6V2h5M16 2h5v4M21 16v4h-5M6 20H1v-4" strokeWidth={1.200} />} />
            <TB c={<><rect x="1" y="1" width="20" height="20" rx="3" strokeDasharray="2.500 1.500" /><path d="M11 5l6 3v6l-6 3-6-3V8zM5 8l6 3 6-3M11 11v6" stroke={B} /></>} />
            <div className="w-[26px] h-[1px] bg-[#777] mt-[2px] shrink-0" />
            <TB h={34} c={<><path d="M13 21H2V1h18v11" /><path d="M5 6h10M5 10h8M5 14h4" strokeDasharray="3 1" /><circle cx="17" cy="18" r="3" stroke={B} /><circle cx="17" cy="18" r="1" fill={B} stroke={B} /></>} />
          </div>

          {/* Dialog */}
          <div className="absolute left-[601px] top-[84px] w-[360px] h-[175px] bg-[#efefef] border border-[#c8c8c8] shadow-[0_0_14px_rgba(0,0,0,0.35)] overflow-hidden">
            <div className="absolute left-[88px] top-0 w-[36px] h-full bg-gradient-to-r from-transparent via-[#e6f5e6] to-transparent" />
            <div className="relative flex items-center justify-between h-[38px] pl-[17px] pr-[13px]">
              <span className="text-[14px] text-[#444]">提示</span>
              <svg width="12" height="12" viewBox="0 0 12 12" stroke="#888"><path d="M1 1l10 10M11 1L1 11" /></svg>
            </div>
            <div className="relative flex pl-[25px] pt-[14px]">
              <div className="w-[28px] h-[28px] rounded-full bg-[#2a7fdc] flex items-center justify-center text-white font-bold text-[18px] leading-none" style={{ fontFamily: '"Liberation Serif",serif' }}>i</div>
              <div className="ml-[11px] mt-[16px] text-[14px] leading-[20px] text-[#444] whitespace-nowrap">{"此范围已布置了负筋\uFF0C是否重复布置负筋?"}</div>
            </div>
            <div className="absolute left-[186px] top-[139px] flex gap-[6px]">
              <div className="w-[78px] h-[26px] rounded-[2px] bg-[#2f80e6] text-white flex items-center justify-center">是</div>
              <div className="w-[77px] h-[26px] rounded-[2px] bg-white border border-[#d0d0d0] text-[#444] flex items-center justify-center">否</div>
            </div>
          </div>
        </div>

        <div className="w-[3px] shrink-0" />

        {/* Right panel */}
        <div className="flex-1 min-w-0 border-l border-[#dcdcdc] flex flex-col overflow-hidden">
          <div className="h-[12px] bg-[#e6e6e6] shrink-0" />
          <div className="h-[22px] bg-[#f0f0f0] flex items-center pl-[8px] text-[#888] whitespace-nowrap shrink-0 text-[12px]">显示设置</div>
          <div className="h-[28px] flex items-end pl-[3px] shrink-0 bg-white">
            <div className="h-[26px] w-[60px] rounded-t-[3px] border border-b-0 border-[#ddd] bg-white text-[#2f80ed] pl-[7px] flex items-center whitespace-nowrap">图元显示</div>
          </div>
          <div className="flex-1 ml-[3px] mb-[40px] border-l-2 border-[#e2e2e2] overflow-hidden">
            <div className="h-[22px] border-t border-[#e4e4e4]" />
            {Array.from({ length: 27 }).map((_, i) => {
              const m: Record<number, [number, string, string]> = {
                0: [1, "所有", "#444"],
                1: [12, "板", "#b56a2a"],
                9: [12, "轴", "#444"],
                12: [12, "基", "#b56a2a"],
                17: [12, "其", "#b56a2a"],
                26: [12, "前", "#7a2a8a"],
              };
              const it = m[i];
              return (
                <div key={i} className="h-[21px] border-t border-[#e4e4e4] flex items-center whitespace-nowrap">
                  {it ? (
                    <>
                      <Minus ml={it[0]} />
                      <span className="ml-[7px]" style={{ color: it[2] }}>{it[1]}</span>
                    </>
                  ) : (
                    <span className="h-full ml-[7px] w-[10px] border-x border-[#e4e4e4] shrink-0" />
                  )}
                </div>
              );
            })}
          </div>
        </div>
      </div>

      {/* Status */}
      <div className="h-[30px] bg-[#fafafa] flex items-center shrink-0 text-[#555]">
        <span className="ml-[12px] w-[50px]">3</span>
        <span className="w-[41px]">{"标高\uFF1A"}</span>
        <span className="w-[99px]">-0.05~2.95</span>
        <span className="w-[110px]">{"选中图元\uFF1A0"}</span>
        <span className="w-[110px]">{"隐藏图元\uFF1A0"}</span>
        <div className="flex items-center">
          <SBtn ml={0} w={24} c={<path d="M2 2v12h12M2 9h5v5" />} />
          <SBtn ml={4} w={36} on dd c={<rect x="2" y="2" width="12" height="12" rx="2.500" />} />
          <SBtn ml={6} w={25} c={<path d="M2 1l12 14M14 1L2 15" stroke="#888" />} />
          <SBtn ml={6} w={35} dd c={<path d="M1 13l10-10M1 14h13M5 9l2 4" />} />
          <SBtn ml={4} w={35} dd c={<><path d="M3 2v6M0 5h6" /><rect x="6" y="8" width="9" height="5" fill={S} /></>} />
          <SBtn ml={5} w={24} c={<><rect x="2" y="1" width="10" height="10" fill={S} /><path d="M1 14h12" /></>} />
          <SBtn ml={4} w={24} c={<><path d="M2 15C2 8 6 3 13 2" /><path d="M10 9v5l3-2.500z" fill={S} /></>} />
        </div>
        <svg width="16" height="16" viewBox="0 0 16 16" fill="none" stroke="#444" className="ml-[17px]"><path d="M1 15L15 1M9 1h6v6M1 9v6h6" /></svg>
        <span className="ml-[3px] whitespace-nowrap text-[#444]">{"移动鼠标切换左右标注\uFF0C点击左键生成负筋\uFF0C右键结束或ESC取消"}</span>
      </div>
    </div>
  );
}
